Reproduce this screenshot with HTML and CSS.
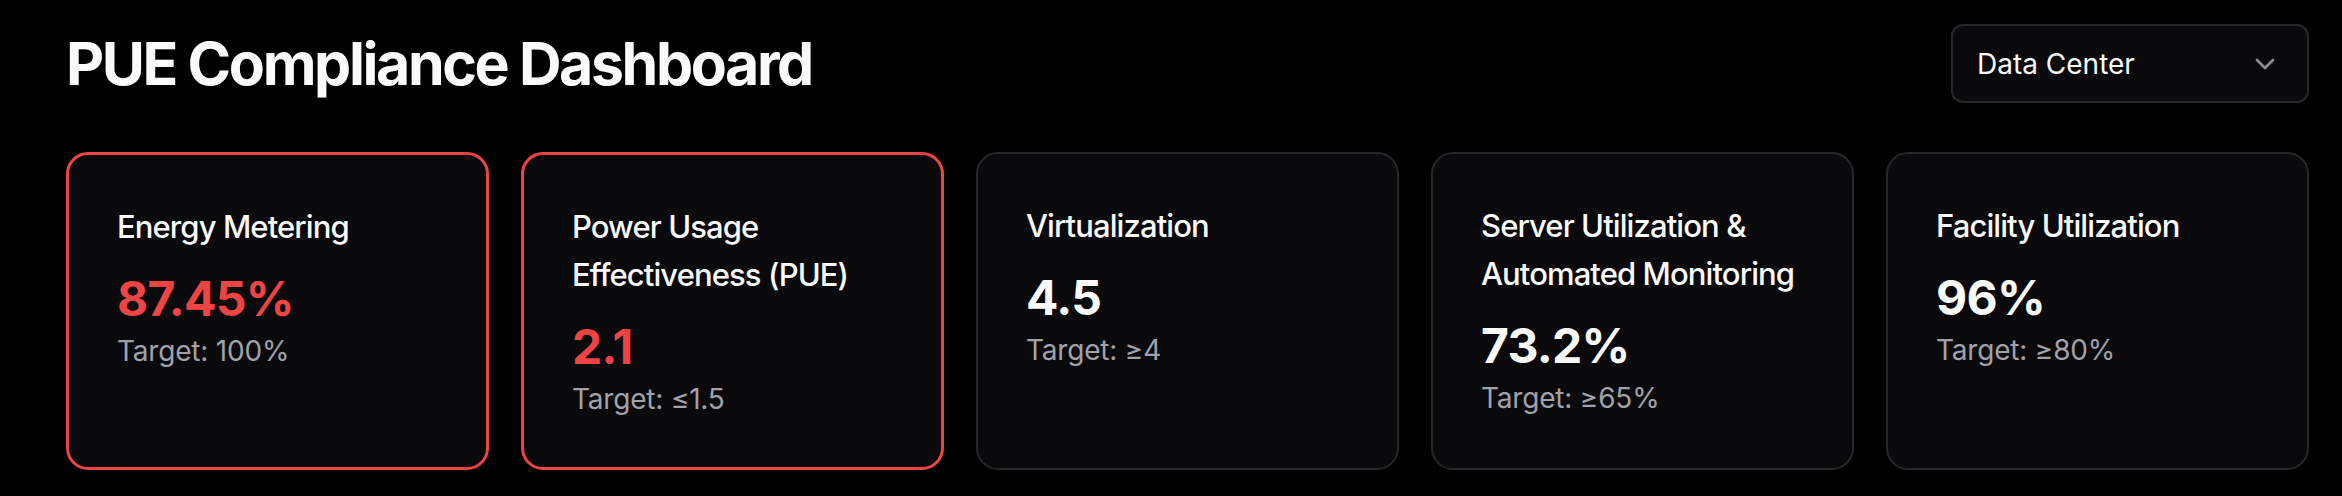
FILE: index.html
```html
<!DOCTYPE html>
<html lang="en">
<head>
<meta charset="utf-8">
<title>PUE Compliance Dashboard</title>
<link rel="stylesheet" href="styles.css">
</head>
<body>
<main class="page">
  <header class="header">
    <h1 class="title">PUE Compliance Dashboard</h1>
    <button class="select" type="button">
      <span class="select-value">Data Center</span>
      <svg class="chevron" viewBox="0 0 24 24" width="32" height="32" fill="none" stroke="currentColor" stroke-width="2" stroke-linecap="round" stroke-linejoin="round"><path d="m6 9 6 6 6-6"/></svg>
    </button>
  </header>
  <section class="cards">
    <article class="card card-alert">
      <h3 class="card-label">Energy Metering</h3>
      <div class="card-value">87.45%</div>
      <p class="card-target">Target: 100%</p>
    </article>
    <article class="card card-alert">
      <h3 class="card-label">Power Usage Effectiveness (PUE)</h3>
      <div class="card-value">2.1</div>
      <p class="card-target">Target: ≤1.5</p>
    </article>
    <article class="card">
      <h3 class="card-label">Virtualization</h3>
      <div class="card-value">4.5</div>
      <p class="card-target">Target: ≥4</p>
    </article>
    <article class="card">
      <h3 class="card-label">Server Utilization &amp; Automated Monitoring</h3>
      <div class="card-value">73.2%</div>
      <p class="card-target">Target: ≥65%</p>
    </article>
    <article class="card">
      <h3 class="card-label">Facility Utilization</h3>
      <div class="card-value">96%</div>
      <p class="card-target">Target: ≥80%</p>
    </article>
  </section>
</main>
</body>
</html>
```
FILE: styles.css
```css
* { box-sizing: border-box; }
html, body {
  margin: 0;
  padding: 0;
  background: #000;
}
body {
  font-family: Inter, "Noto Sans", "Liberation Sans", sans-serif;
  color: #fafafa;
}
.page {
  padding: 24px 33px 24px 66px;
}
.header {
  display: flex;
  align-items: center;
  justify-content: space-between;
  height: 79px;
}
.title {
  margin: 0;
  font-size: 59px;
  line-height: 72px;
  font-weight: 700;
  letter-spacing: -2.4px;
  color: #fafafa;
}
.select {
  width: 358px;
  height: 79px;
  display: flex;
  align-items: center;
  justify-content: space-between;
  padding: 0 26px 0 24px;
  background: #0a0a0c;
  border: 2px solid #27272a;
  border-radius: 12px;
  font-family: inherit;
  font-size: 28px;
  color: #fafafa;
  cursor: pointer;
}
.select-value {
  line-height: 40px;
}
.chevron {
  color: #8b8b90;
  flex: none;
}
.cards {
  display: grid;
  grid-template-columns: repeat(5, 1fr);
  gap: 32px;
  margin-top: 49px;
}
.card {
  background: #0a0a0c;
  border: 2px solid #27272a;
  border-radius: 22px;
  padding: 48px;
}
.card-alert {
  border: 3px solid #ef4444;
}
.card-label {
  margin: 0;
  font-size: 31px;
  line-height: 48px;
  font-weight: 500;
  letter-spacing: -0.9px;
  color: #fafafa;
}
.card-value {
  margin-top: 16px;
  font-size: 48px;
  line-height: 64px;
  font-weight: 700;
  letter-spacing: -0.7px;
  color: #fafafa;
}
.card-alert .card-value {
  color: #ef4444;
}
.card-target {
  margin: 0;
  font-size: 28px;
  line-height: 40px;
  color: #a1a1aa;
  letter-spacing: -0.2px;
}
```
